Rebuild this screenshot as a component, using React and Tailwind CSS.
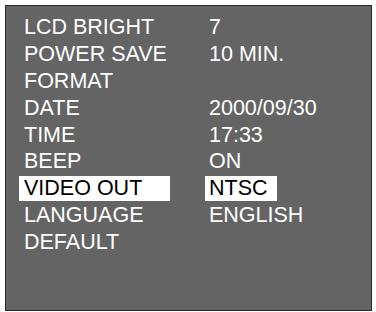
export default function App() {
  const rows = [
    ["LCD BRIGHT", "7"],
    ["POWER SAVE", "10 MIN."],
    ["FORMAT", ""],
    ["DATE", "2000/09/30"],
    ["TIME", "17:33"],
    ["BEEP", "ON"],
    ["VIDEO OUT", "NTSC", true],
    ["LANGUAGE", "ENGLISH"],
    ["DEFAULT", ""],
  ];
  return (
    <div className="w-[376px] h-[312px] bg-white p-[5px]">
      <div className="w-[367px] h-[306px] bg-[#646464] border border-[#2a2a2a] pt-[8px] pl-[13px] font-['Liberation_Sans',Arial,sans-serif] text-[21.5px] leading-[26.9px] text-white">
        {rows.map(([k, v, sel], i) => (
          <div key={i} className="flex h-[26.9px] items-center">
            <div className="w-[186px] shrink-0">
              <span className={sel ? "block w-[151px] h-[25px] leading-[25px] bg-white text-black pl-[5px]" : "block pl-[5px]"}>{k}</span>
            </div>
            <div>
              <span className={sel ? "block w-[72px] h-[25px] leading-[25px] bg-white text-black pl-[4px]" : "block pl-[4px]"}>{v}</span>
            </div>
          </div>
        ))}
      </div>
    </div>
  );
}
